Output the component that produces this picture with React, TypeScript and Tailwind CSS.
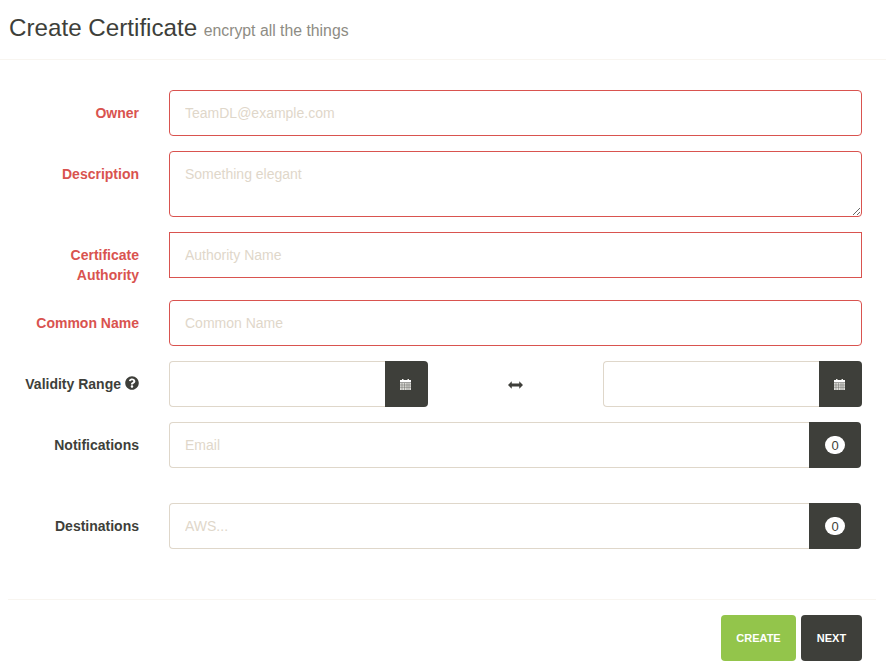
import { FaQuestionCircle } from 'react-icons/fa';

const inputBase =
  'h-[46px] border bg-white px-[15px] text-[14px] outline-none placeholder:text-[#dfd7ca]';

function Label({ text, error, children }: { text: string; error?: boolean; children?: React.ReactNode }) {
  return (
    <label
      className={`w-[139px] shrink-0 pt-[13px] pl-4 text-right text-[14px] leading-[20px] font-bold ${
        error ? 'text-[#d9534f]' : 'text-[#3e3f3a]'
      }`}
    >
      {text}
      {children}
    </label>
  );
}

function CalendarIcon() {
  return (
    <svg width="11" height="11" viewBox="0 0 11 11" fill="none">
      <rect x="2" y="0" width="1.5" height="2" fill="#f0f0ec" />
      <rect x="7.5" y="0" width="1.5" height="2" fill="#f0f0ec" />
      <rect x="0" y="1" width="11" height="2.5" fill="#ffffff" />
      <rect x="0" y="4" width="11" height="7" fill="#dcdcd8" />
      <path d="M2 4v7M4.500 4v7M7 4v7M9 4v7M0 6h11M0 8.300h11" stroke="#6a6a64" strokeWidth="0.5" />
    </svg>
  );
}

function DateField() {
  return (
    <div className="flex w-[259px]">
      <input className={`${inputBase} w-[216px] rounded-l border-r-0 border-[#dfd7ca] text-[#3e3f3a]`} />
      <button type="button" className="flex h-[46px] w-[43px] shrink-0 items-center justify-center rounded-r bg-[#3e3f3a] pr-[2px]">
        <CalendarIcon />
      </button>
    </div>
  );
}

function CountField({ placeholder }: { placeholder: string }) {
  return (
    <div className="flex w-[692px]">
      <input placeholder={placeholder} className={`${inputBase} w-[640px] rounded-l border-r-0 border-[#dfd7ca]`} />
      <div className="flex h-[46px] w-[52px] shrink-0 items-center justify-center rounded-r bg-[#3e3f3a]">
        <span className="flex h-[18px] w-5 items-center justify-center rounded-full bg-white text-[13px] leading-none text-[#3e3f3a]">
          0
        </span>
      </div>
    </div>
  );
}

export default function App() {
  return (
    <div className="h-[672px] w-[886px] overflow-hidden bg-white font-['Liberation_Sans',Arial,sans-serif] text-[#3e3f3a]">
      {/* Header */}
      <div className="flex h-[60px] items-baseline gap-[6.500px] border-b border-[#f8f5f0] pt-[13px] pl-[9px]">
        <h3 className="text-[24.2px] leading-[30px] font-normal">Create Certificate</h3>
        <small className="text-[15.8px] text-[#8e8c84]">encrypt all the things</small>
      </div>

      {/* Form */}
      <form className="flex h-[539px] flex-col gap-[15px] pt-[30px]">
        <div className="flex gap-[30px]">
          <Label text="Owner" error />
          <input placeholder="TeamDL@example.com" className={`${inputBase} w-[693px] rounded border-[#d9534f]`} />
        </div>
        <div className="flex gap-[30px]">
          <Label text="Description" error />
          <textarea
            placeholder="Something elegant"
            className="block h-[66px] w-[693px] rounded border border-[#d9534f] bg-white px-[15px] py-[12px] text-[14px] leading-[20px] outline-none placeholder:text-[#dfd7ca]"
          />
        </div>
        <div className="flex gap-[30px]">
          <Label text="Certificate Authority" error />
          <input placeholder="Authority Name" className={`${inputBase} w-[693px] border-[#d9534f]`} />
        </div>
        <div className="flex gap-[30px]">
          <Label text="Common Name" error />
          <input placeholder="Common Name" className={`${inputBase} w-[693px] rounded border-[#d9534f]`} />
        </div>
        <div className="flex gap-[30px]">
          <Label text="Validity Range">
            <FaQuestionCircle className="ml-[4px] inline-block align-[-1px] text-[14px]" />
          </Label>
          <div className="flex w-[693px] items-center justify-between">
            <DateField />
            <svg className="mt-[2px]" width="15" height="8" viewBox="0 0 16 8" fill="#3e3f3a">
              <path d="M0 4l4-4v2.500h8V0l4 4-4 4V5.500H4V8z" />
            </svg>
            <DateField />
          </div>
        </div>
        <div className="flex gap-[30px]">
          <Label text="Notifications" />
          <CountField placeholder="Email" />
        </div>
        <div className="mt-5 flex gap-[30px]">
          <Label text="Destinations" />
          <CountField placeholder="AWS..." />
        </div>
      </form>

      {/* Footer */}
      <div className="mx-2 flex w-[868px] justify-end gap-[5px] border-t border-[#f8f5f0] pt-[15px] pr-[14px]">
        <button type="button" className="h-[46px] w-[75px] rounded bg-[#93c54b] text-[11px] font-bold text-white">
          CREATE
        </button>
        <button type="button" className="h-[46px] w-[61px] rounded bg-[#3e3f3a] text-[11px] font-bold text-white">
          NEXT
        </button>
      </div>
    </div>
  );
}
